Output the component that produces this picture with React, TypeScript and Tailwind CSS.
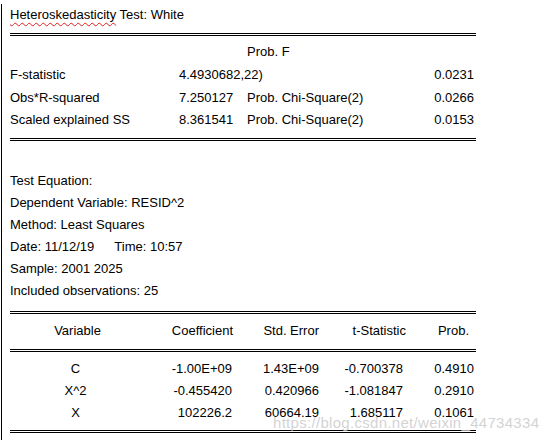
const stats = [
  { label: "F-statistic", value: "4.4930682,22)", prob: "", p: "0.0231", h: "h-[23px] leading-[23px]" },
  { label: "Obs*R-squared", value: "7.250127", prob: "Prob. Chi-Square(2)", p: "0.0266", h: "h-[23px] leading-[23px]" },
  { label: "Scaled explained SS", value: "8.361541", prob: "Prob. Chi-Square(2)", p: "0.0153", h: "h-[22px] leading-[22px]" },
];

const equationLines = [
  "Test Equation:",
  "Dependent Variable: RESID^2",
  "Method: Least Squares",
  null,
  "Sample: 2001 2025",
  "Included observations: 25",
];

const coefRows = [
  { name: "C", coef: "-1.00E+09", se: "1.43E+09", t: "-0.700378", p: "0.4910" },
  { name: "X^2", coef: "-0.455420", se: "0.420966", t: "-1.081847", p: "0.2910" },
  { name: "X", coef: "102226.2", se: "60664.19", t: "1.685117", p: "0.1061" },
];

function DoubleRule({ className }: { className: string }) {
  return <div className={`w-[466px] border-t-[3px] border-double border-black ${className}`} />;
}

const cols = "grid grid-cols-[135px_88px_86px_87px_70px] w-[466px]";

export default function App() {
  return (
    <div className="relative h-[440px] w-[554px] overflow-hidden bg-white font-['Liberation_Sans',Arial,sans-serif] text-[13px] text-black">
      <div className="ml-px h-full border-l border-black pl-[8px]">
        {/* Title */}
        <div className="mt-[4px] h-[22px] leading-[22px]">
          <span className="underline decoration-wavy decoration-[#e02020] decoration-1 underline-offset-[3px]">
            Heteroskedasticity
          </span>{" "}
          Test: White
        </div>

        <DoubleRule className="mt-[7px]" />

        {/* Test statistics */}
        <div className="mt-[4px] flex h-[23px] leading-[23px]">
          <span className="ml-[237px]">Prob. F</span>
        </div>
        {stats.map((s) => (
          <div key={s.label} className={`flex w-[466px] ${s.h}`}>
            <span className="w-[169px]">{s.label}</span>
            <span className="w-[68px]">{s.value}</span>
            <span className="flex-1">{s.prob}</span>
            <span className="pr-[2px] text-right">{s.p}</span>
          </div>
        ))}

        <DoubleRule className="mt-[7px]" />

        {/* Test equation */}
        <div className="mt-[29px]">
          {equationLines.map((line, i) =>
            line === null ? (
              <div key={i} className="h-[22px] leading-[22px]">
                Date: 11/12/19
                <span className="ml-[20px]">Time: 10:57</span>
              </div>
            ) : (
              <div key={i} className="h-[22px] leading-[22px]">
                {line}
              </div>
            )
          )}
        </div>

        <DoubleRule className="mt-[9px]" />

        {/* Coefficient table */}
        <div className={`${cols} mt-[6px] h-[22px] leading-[22px]`}>
          <span className="text-center">Variable</span>
          <span className="text-right">Coefficient</span>
          <span className="text-right">Std. Error</span>
          <span className="text-right">t-Statistic</span>
          <span className="pr-[7px] text-right">Prob.</span>
        </div>

        <DoubleRule className="mt-[7px]" />

        <div className="mt-[6px]">
          {coefRows.map((r) => (
            <div key={r.name} className={`${cols} h-[22px] leading-[22px]`}>
              <span className="pr-[4px] text-center">{r.name}</span>
              <span className="pr-[1px] text-right">{r.coef}</span>
              <span className="text-right">{r.se}</span>
              <span className="pr-[3px] text-right">{r.t}</span>
              <span className="pr-[2px] text-right">{r.p}</span>
            </div>
          ))}
        </div>

        <DoubleRule className="mt-[6px]" />
      </div>

      {/* watermark */}
      <div className="absolute left-[273px] top-[415px] whitespace-nowrap text-[15px] leading-[16px] tracking-[0.3px] text-[#c8c8c8]/80">
        https://blog.csdn.net/weixin_44734334
      </div>
    </div>
  );
}
